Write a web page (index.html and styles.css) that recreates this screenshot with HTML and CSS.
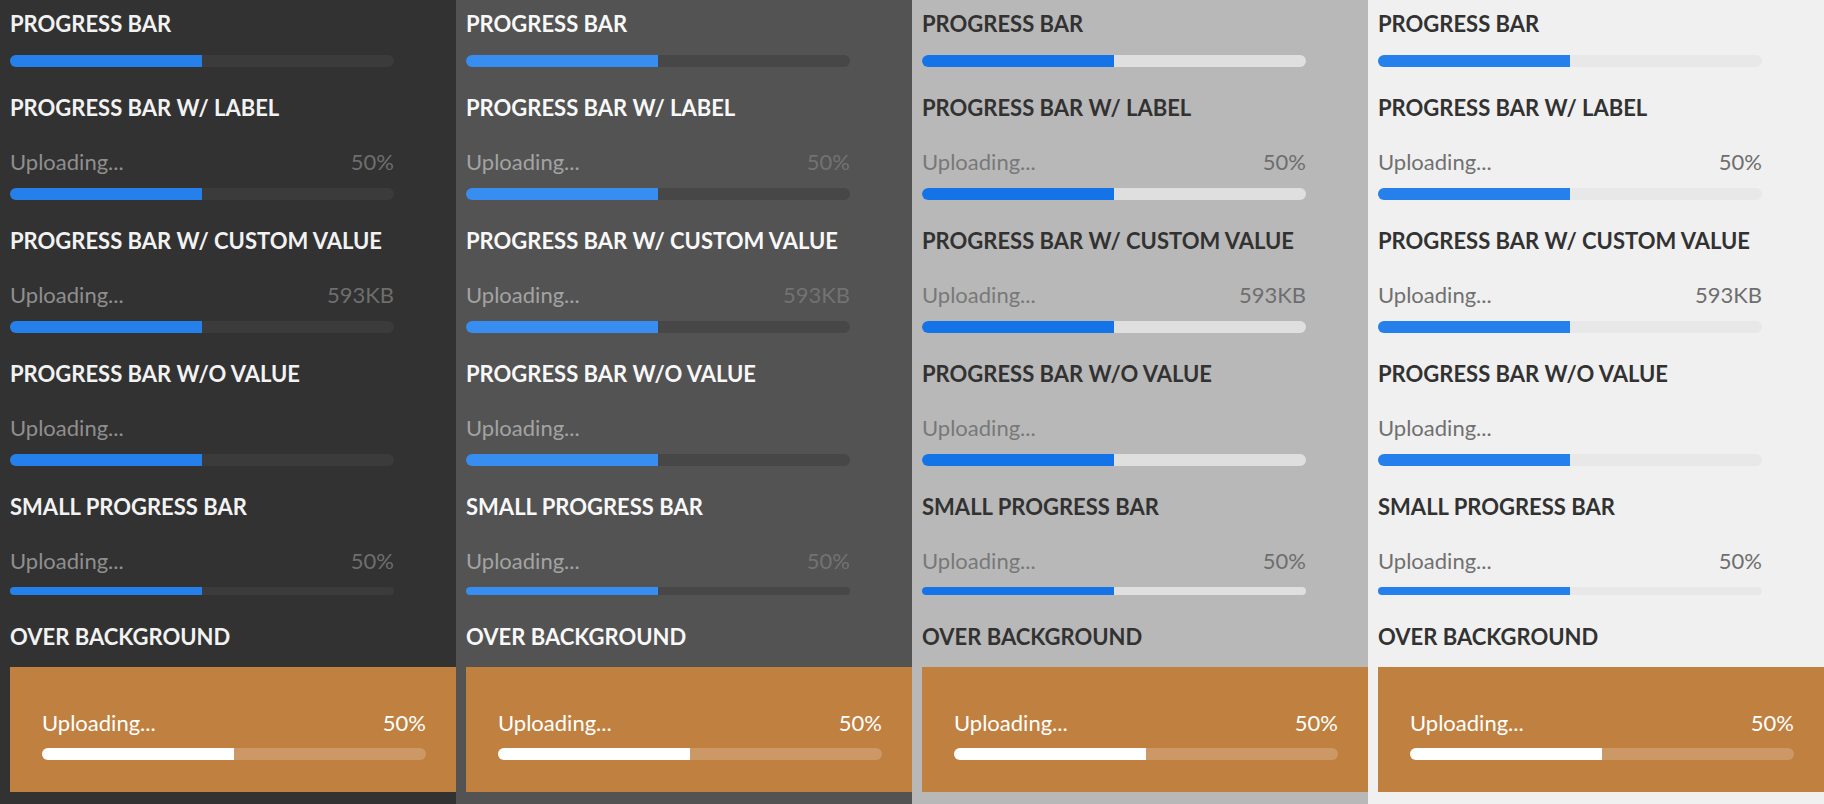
FILE: index.html
```html
<!DOCTYPE html>
<html lang="en">
<head>
<meta charset="utf-8">
<title>Progress Bar</title>
<link rel="stylesheet" href="styles.css">
</head>
<body>
<main class="themes">
  <section class="theme theme-darkest">
    <h2 class="title">Progress Bar</h2>
    <div class="bar"><div class="fill" style="width:50%"></div></div>
    <h2 class="title">Progress Bar w/ Label</h2>
    <div class="row"><span class="label">Uploading...</span><span class="value">50%</span></div>
    <div class="bar"><div class="fill" style="width:50%"></div></div>
    <h2 class="title">Progress Bar w/ Custom Value</h2>
    <div class="row"><span class="label">Uploading...</span><span class="value">593KB</span></div>
    <div class="bar"><div class="fill" style="width:50%"></div></div>
    <h2 class="title">Progress Bar w/o Value</h2>
    <div class="row"><span class="label">Uploading...</span></div>
    <div class="bar"><div class="fill" style="width:50%"></div></div>
    <h2 class="title">Small Progress Bar</h2>
    <div class="row"><span class="label">Uploading...</span><span class="value">50%</span></div>
    <div class="bar bar-small"><div class="fill" style="width:50%"></div></div>
    <h2 class="title">Over Background</h2>
    <div class="over">
      <div class="row"><span class="label">Uploading...</span><span class="value">50%</span></div>
      <div class="bar"><div class="fill" style="width:50%"></div></div>
    </div>
  </section>

  <section class="theme theme-dark">
    <h2 class="title">Progress Bar</h2>
    <div class="bar"><div class="fill" style="width:50%"></div></div>
    <h2 class="title">Progress Bar w/ Label</h2>
    <div class="row"><span class="label">Uploading...</span><span class="value">50%</span></div>
    <div class="bar"><div class="fill" style="width:50%"></div></div>
    <h2 class="title">Progress Bar w/ Custom Value</h2>
    <div class="row"><span class="label">Uploading...</span><span class="value">593KB</span></div>
    <div class="bar"><div class="fill" style="width:50%"></div></div>
    <h2 class="title">Progress Bar w/o Value</h2>
    <div class="row"><span class="label">Uploading...</span></div>
    <div class="bar"><div class="fill" style="width:50%"></div></div>
    <h2 class="title">Small Progress Bar</h2>
    <div class="row"><span class="label">Uploading...</span><span class="value">50%</span></div>
    <div class="bar bar-small"><div class="fill" style="width:50%"></div></div>
    <h2 class="title">Over Background</h2>
    <div class="over">
      <div class="row"><span class="label">Uploading...</span><span class="value">50%</span></div>
      <div class="bar"><div class="fill" style="width:50%"></div></div>
    </div>
  </section>

  <section class="theme theme-light">
    <h2 class="title">Progress Bar</h2>
    <div class="bar"><div class="fill" style="width:50%"></div></div>
    <h2 class="title">Progress Bar w/ Label</h2>
    <div class="row"><span class="label">Uploading...</span><span class="value">50%</span></div>
    <div class="bar"><div class="fill" style="width:50%"></div></div>
    <h2 class="title">Progress Bar w/ Custom Value</h2>
    <div class="row"><span class="label">Uploading...</span><span class="value">593KB</span></div>
    <div class="bar"><div class="fill" style="width:50%"></div></div>
    <h2 class="title">Progress Bar w/o Value</h2>
    <div class="row"><span class="label">Uploading...</span></div>
    <div class="bar"><div class="fill" style="width:50%"></div></div>
    <h2 class="title">Small Progress Bar</h2>
    <div class="row"><span class="label">Uploading...</span><span class="value">50%</span></div>
    <div class="bar bar-small"><div class="fill" style="width:50%"></div></div>
    <h2 class="title">Over Background</h2>
    <div class="over">
      <div class="row"><span class="label">Uploading...</span><span class="value">50%</span></div>
      <div class="bar"><div class="fill" style="width:50%"></div></div>
    </div>
  </section>

  <section class="theme theme-lightest">
    <h2 class="title">Progress Bar</h2>
    <div class="bar"><div class="fill" style="width:50%"></div></div>
    <h2 class="title">Progress Bar w/ Label</h2>
    <div class="row"><span class="label">Uploading...</span><span class="value">50%</span></div>
    <div class="bar"><div class="fill" style="width:50%"></div></div>
    <h2 class="title">Progress Bar w/ Custom Value</h2>
    <div class="row"><span class="label">Uploading...</span><span class="value">593KB</span></div>
    <div class="bar"><div class="fill" style="width:50%"></div></div>
    <h2 class="title">Progress Bar w/o Value</h2>
    <div class="row"><span class="label">Uploading...</span></div>
    <div class="bar"><div class="fill" style="width:50%"></div></div>
    <h2 class="title">Small Progress Bar</h2>
    <div class="row"><span class="label">Uploading...</span><span class="value">50%</span></div>
    <div class="bar bar-small"><div class="fill" style="width:50%"></div></div>
    <h2 class="title">Over Background</h2>
    <div class="over">
      <div class="row"><span class="label">Uploading...</span><span class="value">50%</span></div>
      <div class="bar"><div class="fill" style="width:50%"></div></div>
    </div>
  </section>
</main>
</body>
</html>
```

FILE: styles.css
```css
* { box-sizing: border-box; }

html, body {
  margin: 0;
  padding: 0;
  width: 1824px;
  height: 804px;
  overflow: hidden;
  font-family: "Lato", "Open Sans", sans-serif;
}

.themes {
  display: grid;
  grid-template-columns: repeat(4, 456px);
  height: 804px;
}

.theme {
  display: flex;
  flex-direction: column;
  padding: 11px 0 0 10px;
}

.title {
  margin: 28px 0 0 0;
  font-size: 22px;
  line-height: 26px;
  font-weight: 700;
  letter-spacing: 0;
  text-transform: uppercase;
}

.title:first-child { margin-top: 0; }

.bar-small + .title { margin-top: 29px; }

.title + .bar { margin-top: 18px; }

.title + .row { margin-top: 28px; }

.row {
  display: flex;
  justify-content: space-between;
  width: 384px;
  font-size: 22px;
  line-height: 26px;
  font-weight: 400;
}

.bar {
  width: 384px;
  height: 12px;
  border-radius: 6px;
  overflow: hidden;
  margin-top: 13px;
}

.bar-small {
  height: 8px;
  border-radius: 4px;
}

.fill {
  height: 100%;
}

.title + .over { margin-top: 17px; }

.over {
  background: #c08040;
  padding: 43px 32px 32px 32px;
}

/* Darkest */
.theme-darkest { background: #323232; }
.theme-darkest .title { color: #f2f2f2; }
.theme-darkest .label { color: #8f8f8f; }
.theme-darkest .value { color: #6e6e6e; }
.theme-darkest .bar { background: #3b3b3b; }
.theme-darkest .fill { background: #2680eb; }

/* Dark */
.theme-dark { background: #535353; }
.theme-dark .title { color: #f8f8f8; }
.theme-dark .label { color: #a3a3a3; }
.theme-dark .value { color: #727272; }
.theme-dark .bar { background: #474747; }
.theme-dark .fill { background: #378ef0; }

/* Light */
.theme-light { background: #b8b8b8; }
.theme-light .title { color: #323232; }
.theme-light .label { color: #787878; }
.theme-light .value { color: #6e6e6e; }
.theme-light .bar { background: #dfdfdf; }
.theme-light .fill { background: #1473e6; }

/* Lightest */
.theme-lightest { background: #f0f0f0; }
.theme-lightest .title { color: #323232; }
.theme-lightest .label { color: #707070; }
.theme-lightest .value { color: #6e6e6e; }
.theme-lightest .bar { background: #e8e8e8; }
.theme-lightest .fill { background: #2680eb; }

/* Over background (shared by all themes) */
.theme .over .label,
.theme .over .value { color: #ffffff; }
.theme .over .bar {
  margin-top: 12px;
  background: rgba(255, 255, 255, 0.2);
}
.theme .over .fill { background: #ffffff; }
```
